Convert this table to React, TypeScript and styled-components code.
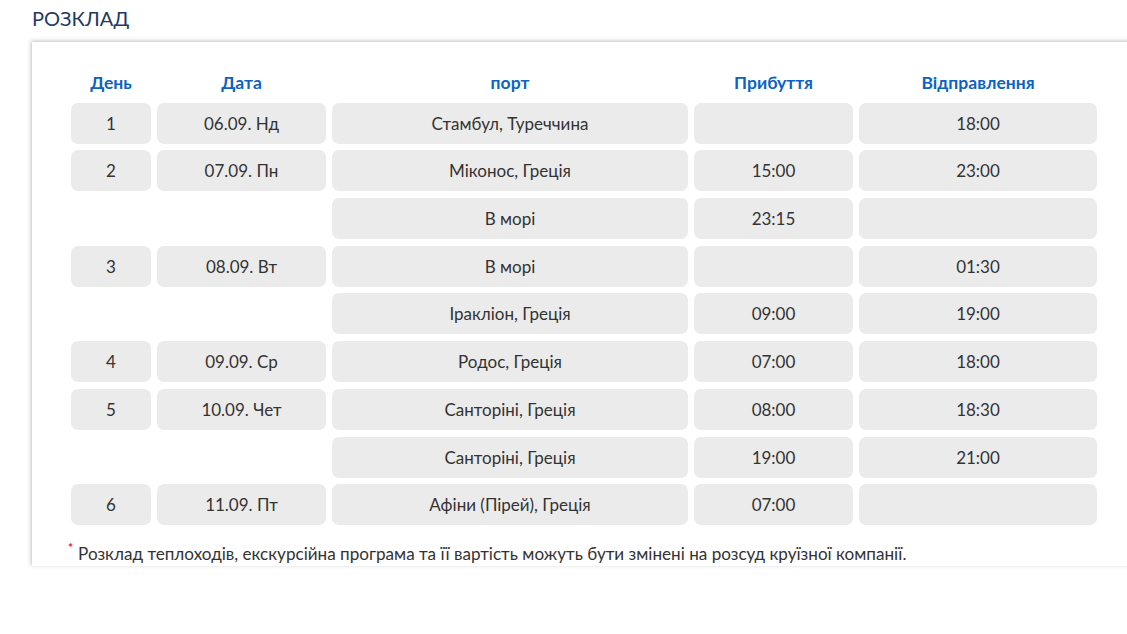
import * as React from "react";
import styled, { createGlobalStyle } from "styled-components";

const GlobalStyle = createGlobalStyle`
  body {
    margin: 0;
    background: #fff;
    font-family: "Lato", "Noto Sans", sans-serif;
    overflow: hidden;
  }
`;

const Page = styled.div`
  width: 1127px;
  height: 634px;
  overflow: hidden;
`;

const Title = styled.h2`
  margin: 0;
  padding: 6px 0 0 32px;
  height: 36px;
  font-size: 20px;
  font-weight: 400;
  color: #1d3a63;
  letter-spacing: 0.1px;
`;

const Card = styled.div`
  margin-left: 32px;
  width: 1140px;
  height: 524px;
  background: #fff;
  box-shadow: -1px -1px 4px rgba(0, 0, 0, 0.25);
  padding: 31px 0 0 39px;
  box-sizing: border-box;
`;

const Grid = styled.div`
  display: grid;
  grid-template-columns: 80px 169px 356px 159px 238px;
  column-gap: 6px;
  row-gap: 6.7px;
`;

const HeadCell = styled.div`
  height: 23px;
  text-align: center;
  font-weight: 700;
  font-size: 17.5px;
  color: #0b62c4;
  line-height: 20px;
`;

const Cell = styled.div<{ $empty?: boolean }>`
  height: 41px;
  display: flex;
  align-items: center;
  justify-content: center;
  background: ${(p) => (p.$empty ? "transparent" : "#ebebeb")};
  border-radius: 7px;
  font-size: 17px;
  color: #333;
`;

const Note = styled.p`
  margin: 15px 0 0 -3px;
  font-size: 17.1px;
  color: #333;
`;

const Star = styled.sup`
  color: #e0202a;
  font-size: 12px;
  font-weight: 700;
  margin-right: 5px;
  vertical-align: 8px;
`;

type Row = [string, string, string, string, string];

const rows: Row[] = [
  ["1", "06.09. Нд", "Стамбул, Туреччина", "", "18:00"],
  ["2", "07.09. Пн", "Міконос, Греція", "15:00", "23:00"],
  ["", "", "В морі", "23:15", ""],
  ["3", "08.09. Вт", "В морі", "", "01:30"],
  ["", "", "Іракліон, Греція", "09:00", "19:00"],
  ["4", "09.09. Ср", "Родос, Греція", "07:00", "18:00"],
  ["5", "10.09. Чет", "Санторіні, Греція", "08:00", "18:30"],
  ["", "", "Санторіні, Греція", "19:00", "21:00"],
  ["6", "11.09. Пт", "Афіни (Пірей), Греція", "07:00", ""],
];

const heads = ["День", "Дата", "порт", "Прибуття", "Відправлення"];

export default function App() {
  return (
    <Page>
      <GlobalStyle />
      <Title>РОЗКЛАД</Title>
      <Card>
        <Grid>
          {heads.map((h) => (
            <HeadCell key={h}>{h}</HeadCell>
          ))}
          {rows.map((r, i) =>
            r.map((v, j) => (
              <Cell key={`${i}-${j}`} $empty={j < 2 && r[0] === ""}>
                {v}
              </Cell>
            ))
          )}
        </Grid>
        <Note>
          <Star>*</Star>
          Розклад теплоходів, екскурсійна програма та її вартість можуть бути
          змінені на розсуд круїзної компанії.
        </Note>
      </Card>
    </Page>
  );
}
